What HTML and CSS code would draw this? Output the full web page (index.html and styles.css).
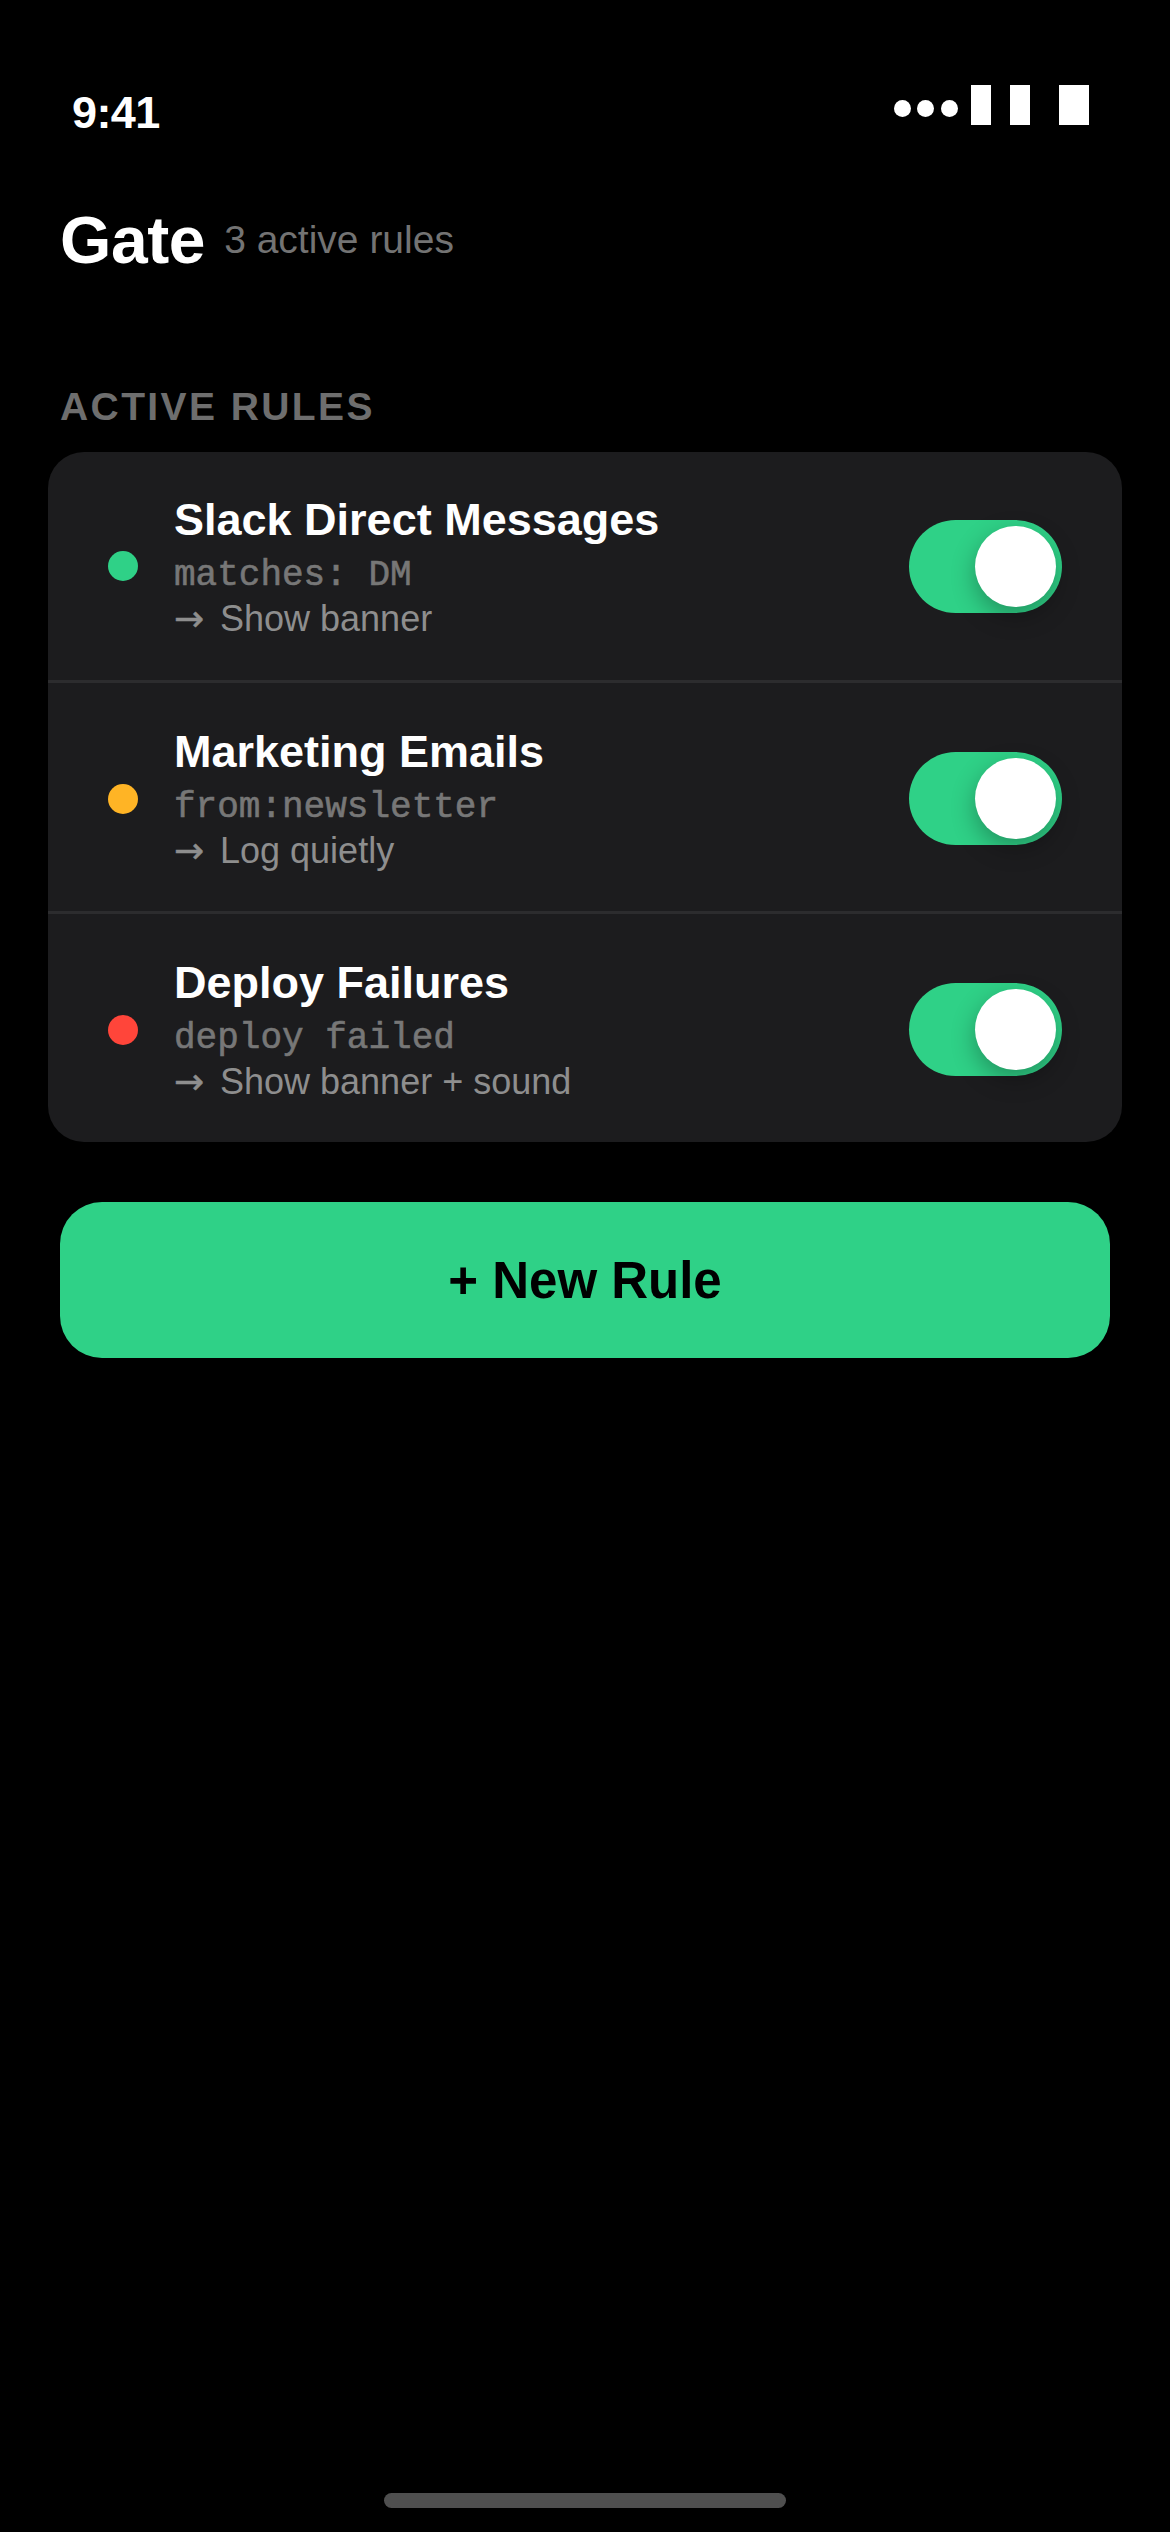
FILE: index.html
```html
<!DOCTYPE html>
<html lang="en">
<head>
    <meta charset="UTF-8">
    <meta name="viewport" content="width=device-width, initial-scale=1.0">
    <title>Gate</title>
    <link rel="stylesheet" href="styles.css">
</head>
<body>
    <div class="screen">
        <div class="status-bar">
            <span class="time">9:41</span>
            <div class="status-icons">
                <span class="signal-dot"></span>
                <span class="signal-dot"></span>
                <span class="signal-dot"></span>
                <span class="bar bar-first"></span>
                <span class="bar bar-second"></span>
                <span class="bar bar-battery"></span>
            </div>
        </div>

        <header class="header">
            <h1 class="title">Gate</h1>
            <span class="subtitle">3 active rules</span>
        </header>

        <h2 class="section-label">ACTIVE RULES</h2>

        <div class="rules-card">
            <div class="rule">
                <span class="rule-dot dot-green"></span>
                <div class="rule-text">
                    <div class="rule-name">Slack Direct Messages</div>
                    <div class="rule-match">matches: DM</div>
                    <div class="rule-action"><span class="arrow">→</span> Show banner</div>
                </div>
                <div class="toggle"><span class="knob"></span></div>
            </div>
            <div class="rule">
                <span class="rule-dot dot-amber"></span>
                <div class="rule-text">
                    <div class="rule-name">Marketing Emails</div>
                    <div class="rule-match">from:newsletter</div>
                    <div class="rule-action"><span class="arrow">→</span> Log quietly</div>
                </div>
                <div class="toggle"><span class="knob"></span></div>
            </div>
            <div class="rule">
                <span class="rule-dot dot-red"></span>
                <div class="rule-text">
                    <div class="rule-name">Deploy Failures</div>
                    <div class="rule-match">deploy failed</div>
                    <div class="rule-action"><span class="arrow">→</span> Show banner + sound</div>
                </div>
                <div class="toggle"><span class="knob"></span></div>
            </div>
        </div>

        <button class="new-rule" type="button">+ New Rule</button>

        <div class="home-indicator"></div>
    </div>
</body>
</html>
```

FILE: styles.css
```css
* {
    margin: 0;
    padding: 0;
    box-sizing: border-box;
}

body {
    background-color: #000;
    font-family: "Liberation Sans", Arial, sans-serif;
    color: #fff;
}

.screen {
    display: flex;
    flex-direction: column;
    width: 1170px;
    height: 2532px;
    overflow: hidden;
}

/* Status bar */
.status-bar {
    display: flex;
    justify-content: space-between;
    align-items: center;
    height: 60px;
    margin-top: 83px;
    padding: 0 81px 0 72px;
}

.time {
    font-size: 45px;
    font-weight: 700;
    letter-spacing: -0.6px;
}

.status-icons {
    display: flex;
    align-items: center;
    margin-top: -16px;
}

.signal-dot {
    width: 17px;
    height: 17px;
    margin-top: 7px;
    margin-right: 6.5px;
    border-radius: 50%;
    background-color: #fff;
}

.bar {
    height: 40px;
    background-color: #fff;
}

.bar-first {
    width: 20px;
    margin-left: 7px;
}

.bar-second {
    width: 20px;
    margin-left: 19px;
}

.bar-battery {
    width: 30px;
    margin-left: 29px;
}

/* Title */
.header {
    display: flex;
    align-items: center;
    gap: 19px;
    margin-top: 59px;
    padding: 0 60px;
}

.title {
    font-size: 66px;
    font-weight: 700;
    letter-spacing: -0.4px;
}

.subtitle {
    font-size: 39px;
    color: #737373;
}

.section-label {
    margin-top: 107px;
    padding: 0 60px;
    font-size: 39px;
    font-weight: 700;
    letter-spacing: 2.4px;
    color: #6e6e6e;
}

/* Rules list */
.rules-card {
    margin: 23px 48px 0;
    background-color: #1c1c1e;
    border-radius: 36px;
}

.rule {
    display: flex;
    align-items: center;
    height: 228px;
    padding: 0 60px;
}

.rule + .rule {
    height: 231px;
    padding-top: 3px;
    border-top: 3px solid #2c2c2e;
}

.rule-dot {
    flex-shrink: 0;
    width: 30px;
    height: 30px;
    border-radius: 50%;
}

.dot-green {
    background-color: #2fd187;
}

.dot-amber {
    background-color: #ffb425;
}

.dot-red {
    background-color: #ff453a;
}

.rule-text {
    flex: 1;
    margin-left: 36px;
}

.rule-name {
    font-size: 45px;
    font-weight: 700;
    line-height: 54px;
}

.rule-match {
    margin-top: 5px;
    font-family: "Liberation Mono", "Courier New", monospace;
    font-size: 36px;
    line-height: 48px;
    color: #777;
    -webkit-text-stroke: 0.6px #777;
}

.rule-action {
    margin-top: -2px;
    font-size: 36px;
    line-height: 42px;
    color: #8e8e8e;
}

/* DejaVu has the longer arrow, keep the advance of the text font */
.arrow {
    display: inline-block;
    width: 36px;
    font-family: "DejaVu Sans", sans-serif;
    font-size: 36px;
    line-height: 1;
    -webkit-text-stroke: 0.5px #8e8e8e;
}

.toggle {
    display: flex;
    justify-content: flex-end;
    align-items: center;
    flex-shrink: 0;
    width: 153px;
    height: 93px;
    padding: 0 6px;
    background-color: #2fd187;
    border-radius: 47px;
}

.knob {
    width: 81px;
    height: 81px;
    background-color: #fff;
    border-radius: 50%;
    box-shadow: 0 9px 24px rgba(0, 0, 0, 0.3);
}

.new-rule {
    height: 156px;
    margin: 60px 60px 0;
    border: none;
    border-radius: 42px;
    background-color: #2fd187;
    font-family: "Liberation Sans", Arial, sans-serif;
    font-size: 51px;
    font-weight: 700;
    color: #000;
}

.home-indicator {
    width: 402px;
    height: 15px;
    margin: auto auto 24px;
    background-color: #4f4f4f;
    border-radius: 8px;
}
```
